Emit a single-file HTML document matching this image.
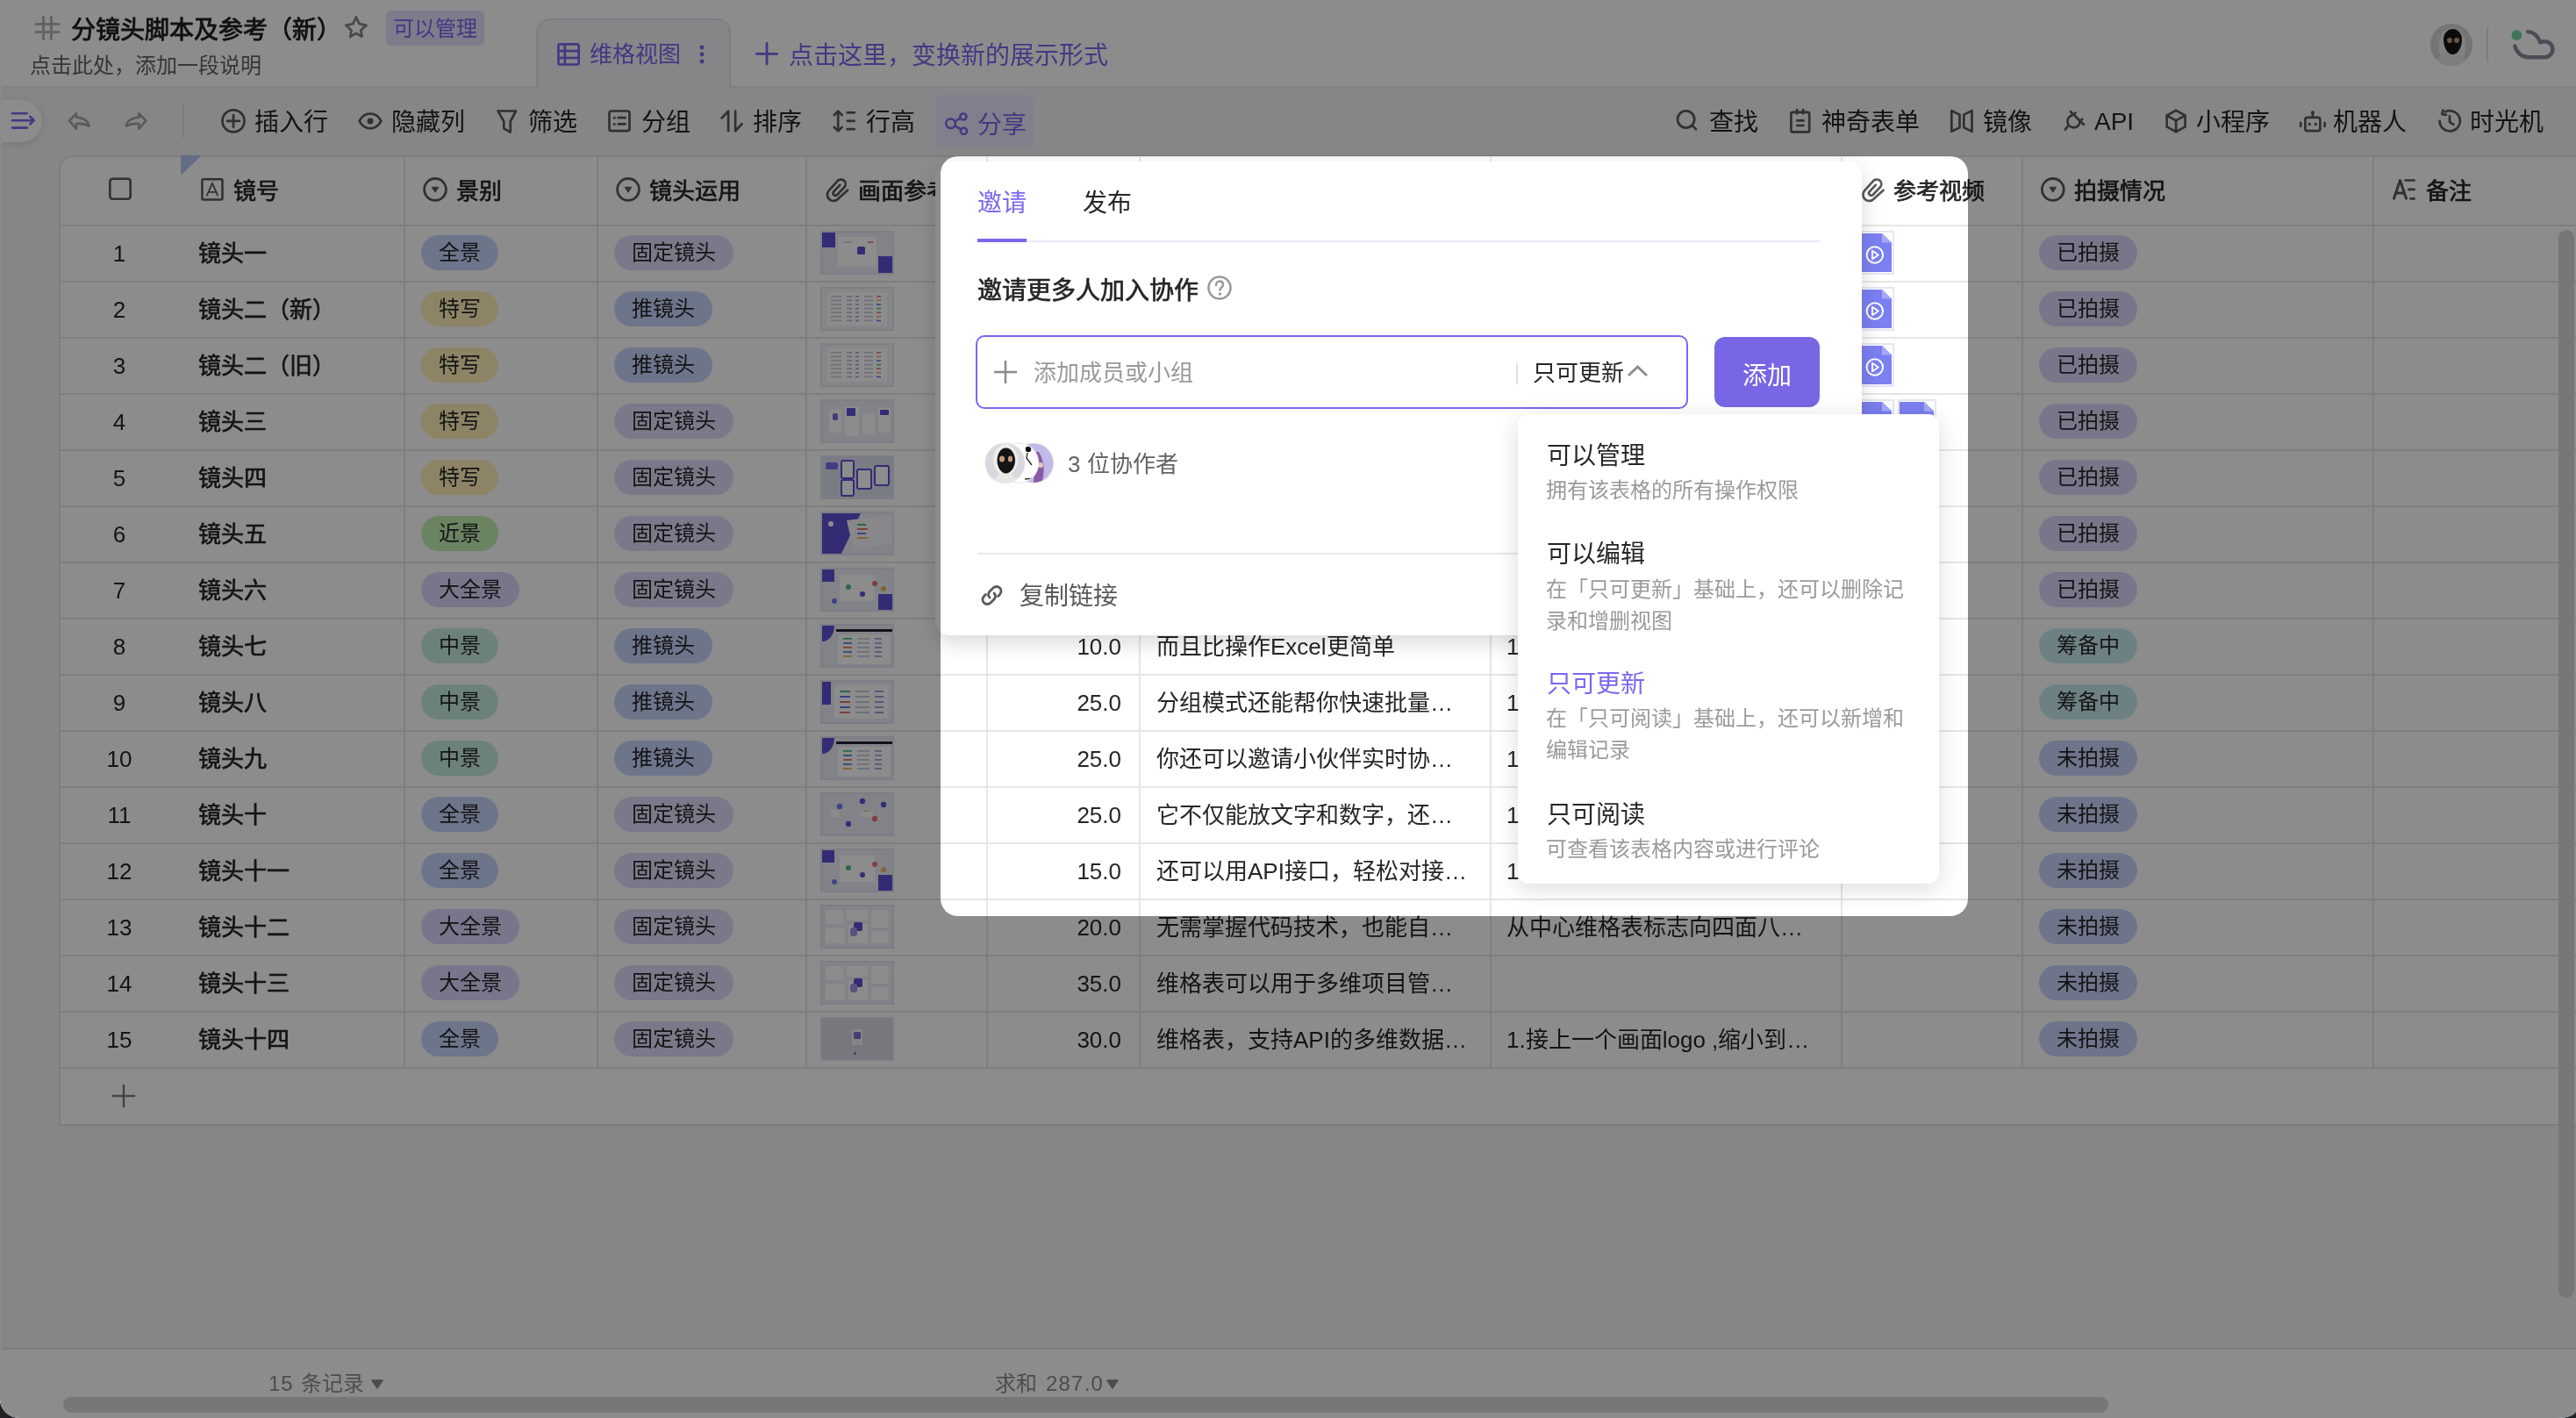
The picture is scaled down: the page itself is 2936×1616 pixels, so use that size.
<!DOCTYPE html><html lang="zh-CN"><head><meta charset="utf-8"><style>
*{box-sizing:border-box;margin:0;padding:0}
html,body{width:2936px;height:1616px;overflow:hidden;background:#1f2328}
body{font-family:"Liberation Sans",sans-serif;position:relative}
.page{position:absolute;left:0;top:0;width:2936px;height:1616px;background:#f3f4f8;border-radius:0 0 20px 22px / 0 0 9px 22px;overflow:hidden;will-change:transform}
.t{position:absolute;line-height:40px;white-space:nowrap}
.abs{position:absolute}
svg{position:absolute;overflow:visible}
.hl{position:absolute;height:2px;background:#e6e6e6}
.vl{position:absolute;width:2px;background:#e6e6e6}
.tag{position:absolute;height:40px;border-radius:20px;font-size:24px;line-height:40px;color:#262626;padding:0 20px;white-space:nowrap}
.thumb{position:absolute;width:84px;height:50px;border:2px solid #e4e4f0;background:#eef0f7;overflow:hidden}
.vid{position:absolute;width:44px;height:50px;border:2px solid #e6e6f5;background:#fff}
</style></head><body><div class="page">
<div class="abs" style="left:0;top:0;width:2px;height:1616px;background:#fbfbff;z-index:5"></div>
<div class="abs" style="left:0;top:0;width:2936px;height:100px;background:#fff;border-bottom:2px solid #e8e8f0"></div>
<div class="t" style="left:81px;top:15.0px;font-size:28px;color:#1f1f1f;font-weight:500;-webkit-text-stroke:0.9px #1f1f1f;">分镜头脚本及参考（新）</div>
<div class="abs" style="left:440px;top:12px;width:112px;height:40px;border-radius:6px;background:#e6e1fd"></div>
<div class="t" style="left:448px;top:13.4px;font-size:24px;color:#7b67ee;font-weight:normal;">可以管理</div>
<div class="t" style="left:34px;top:55.4px;font-size:24px;color:#636363;font-weight:normal;">点击此处，添加一段说明</div>
<div class="abs" style="left:611px;top:21px;width:222px;height:80px;background:#f3f4f8;border:2px solid #e3e3ee;border-bottom:none;border-radius:16px 16px 0 0"></div>
<div class="t" style="left:672px;top:42.4px;font-size:26px;color:#7b67ee;font-weight:normal;">维格视图</div>
<div class="t" style="left:899px;top:43.5px;font-size:28px;color:#7b67ee;font-weight:normal;">点击这里，变换新的展示形式</div>
<div class="abs" style="left:2770px;top:27px;width:48px;height:48px;border-radius:50%;background:radial-gradient(circle at 50% 45%,#e2e2e2,#c9c9c9);overflow:hidden"><div class="abs" style="left:10px;top:5px;width:30px;height:40px;border-radius:50% 50% 40% 40%;background:#ededed"></div><div class="abs" style="left:7px;top:34px;width:34px;height:20px;border-radius:45% 45% 0 0;background:#e6e6e6"></div><div class="abs" style="left:15px;top:6px;width:21px;height:29px;border-radius:50% 50% 50% 50% / 40% 40% 60% 60%;background:#141414"></div><div class="abs" style="left:18.5px;top:15.5px;width:6px;height:6px;border-radius:50%;background:#c79a7c"></div><div class="abs" style="left:27px;top:15.5px;width:6px;height:6px;border-radius:50%;background:#c79a7c"></div></div>
<div class="abs" style="left:2834px;top:31px;width:2px;height:40px;background:#e6e6e6"></div>
<div class="abs" style="left:-30px;top:114px;width:78px;height:48px;border-radius:24px;background:#fff;box-shadow:0 2px 10px rgba(0,0,0,0.12)"></div>
<div class="abs" style="left:208px;top:119px;width:2px;height:38px;background:#dedede"></div>
<div class="t" style="left:290px;top:120.0px;font-size:28px;color:#262626;font-weight:normal;">插入行</div>
<div class="t" style="left:446px;top:120.0px;font-size:28px;color:#262626;font-weight:normal;">隐藏列</div>
<div class="t" style="left:602px;top:120.0px;font-size:28px;color:#262626;font-weight:normal;">筛选</div>
<div class="t" style="left:731px;top:120.0px;font-size:28px;color:#262626;font-weight:normal;">分组</div>
<div class="t" style="left:858px;top:120.0px;font-size:28px;color:#262626;font-weight:normal;">排序</div>
<div class="t" style="left:987px;top:120.0px;font-size:28px;color:#262626;font-weight:normal;">行高</div>
<div class="abs" style="left:1066px;top:108px;width:112px;height:60px;border-radius:8px;background:#ebe8fd"></div>
<div class="t" style="left:1114px;top:123.2px;font-size:28px;color:#7b67ee;font-weight:normal;">分享</div>
<div class="t" style="left:1948px;top:120.2px;font-size:28px;color:#262626;font-weight:normal;">查找</div>
<div class="t" style="left:2076px;top:120.2px;font-size:28px;color:#262626;font-weight:normal;">神奇表单</div>
<div class="t" style="left:2260px;top:120.2px;font-size:28px;color:#262626;font-weight:normal;">镜像</div>
<div class="t" style="left:2387px;top:119px;font-size:28px;color:#262626">API</div>
<div class="t" style="left:2503px;top:120.2px;font-size:28px;color:#262626;font-weight:normal;">小程序</div>
<div class="t" style="left:2659px;top:120.2px;font-size:28px;color:#262626;font-weight:normal;">机器人</div>
<div class="t" style="left:2815px;top:120.2px;font-size:28px;color:#262626;font-weight:normal;">时光机</div>
<div class="abs" style="left:67px;top:177px;width:3033px;height:1106px;background:#fff;border:2px solid #e3e3e3;border-radius:16px 0 0 0"></div>
<div class="hl" style="left:67px;top:256px;width:3033px"></div>
<div class="hl" style="left:67px;top:320px;width:3033px"></div>
<div class="hl" style="left:67px;top:384px;width:3033px"></div>
<div class="hl" style="left:67px;top:448px;width:3033px"></div>
<div class="hl" style="left:67px;top:512px;width:3033px"></div>
<div class="hl" style="left:67px;top:576px;width:3033px"></div>
<div class="hl" style="left:67px;top:640px;width:3033px"></div>
<div class="hl" style="left:67px;top:704px;width:3033px"></div>
<div class="hl" style="left:67px;top:768px;width:3033px"></div>
<div class="hl" style="left:67px;top:832px;width:3033px"></div>
<div class="hl" style="left:67px;top:896px;width:3033px"></div>
<div class="hl" style="left:67px;top:960px;width:3033px"></div>
<div class="hl" style="left:67px;top:1024px;width:3033px"></div>
<div class="hl" style="left:67px;top:1088px;width:3033px"></div>
<div class="hl" style="left:67px;top:1152px;width:3033px"></div>
<div class="hl" style="left:67px;top:1216px;width:3033px"></div>
<div class="vl" style="left:460px;top:177px;height:1040px"></div>
<div class="vl" style="left:680px;top:177px;height:1040px"></div>
<div class="vl" style="left:918px;top:177px;height:1040px"></div>
<div class="vl" style="left:1124px;top:177px;height:1040px"></div>
<div class="vl" style="left:1298px;top:177px;height:1040px"></div>
<div class="vl" style="left:1698px;top:177px;height:1040px"></div>
<div class="vl" style="left:2098px;top:177px;height:1040px"></div>
<div class="vl" style="left:2304px;top:177px;height:1040px"></div>
<div class="vl" style="left:2704px;top:177px;height:1040px"></div>
<svg style="left:206px;top:177px" width="24" height="23" viewBox="0 0 24 23"><path d="M0 0 L24 0 L0 23 Z" fill="#b7c6f5"/></svg>
<div class="t" style="left:266px;top:197.7px;font-size:26px;color:#262626;font-weight:500;-webkit-text-stroke:0.7px #262626;">镜号</div>
<div class="t" style="left:520px;top:197.7px;font-size:26px;color:#262626;font-weight:500;-webkit-text-stroke:0.7px #262626;">景别</div>
<div class="t" style="left:740px;top:197.7px;font-size:26px;color:#262626;font-weight:500;-webkit-text-stroke:0.7px #262626;">镜头运用</div>
<div class="t" style="left:978px;top:197.7px;font-size:26px;color:#262626;font-weight:500;-webkit-text-stroke:0.7px #262626;">画面参考</div>
<div class="t" style="left:1144px;top:197.7px;font-size:26px;color:#262626;font-weight:500;-webkit-text-stroke:0.7px #262626;">时长</div>
<div class="t" style="left:1318px;top:197.7px;font-size:26px;color:#262626;font-weight:500;-webkit-text-stroke:0.7px #262626;">台词</div>
<div class="t" style="left:1717px;top:197.7px;font-size:26px;color:#262626;font-weight:500;-webkit-text-stroke:0.7px #262626;">画面描述</div>
<div class="t" style="left:2158px;top:197.7px;font-size:26px;color:#262626;font-weight:500;-webkit-text-stroke:0.7px #262626;">参考视频</div>
<div class="t" style="left:2364px;top:197.7px;font-size:26px;color:#262626;font-weight:500;-webkit-text-stroke:0.7px #262626;">拍摄情况</div>
<div class="t" style="left:2765px;top:197.7px;font-size:26px;color:#262626;font-weight:500;-webkit-text-stroke:0.7px #262626;">备注</div>
<div class="t" style="left:67px;top:269.0px;width:138px;text-align:center;font-size:26px;color:#262626">1</div>
<div class="t" style="left:226px;top:268.9px;font-size:26px;color:#262626;font-weight:500;-webkit-text-stroke:0.7px #262626;">镜头一</div>
<div class="tag" style="left:480px;top:268px;background:#c6d6fd">全景</div>
<div class="tag" style="left:700px;top:268px;background:#e2dafb">固定镜头</div>
<div class="thumb" style="left:935px;top:263px"></div>
<div class="vid" style="left:2115px;top:263px"><svg style="left:-2px;top:-1px" width="44" height="46" viewBox="0 0 44 46"><path d="M2 2 L30 2 L41 12.5 L41 46 L2 46 Z" fill="#7c80f2"/><path d="M30 2 L41 12.5 L30 12.5 Z" fill="#a6a9f8"/><circle cx="21.8" cy="26.5" r="9.2" fill="none" stroke="#fff" stroke-width="2"/><path d="M19 21.8 L25.8 26.5 L19 31.2 Z" fill="none" stroke="#fff" stroke-width="1.9" stroke-linejoin="round"/></svg></div>
<div class="tag" style="left:2324px;top:268px;background:#ded7fc">已拍摄</div>
<div class="t" style="left:67px;top:333.0px;width:138px;text-align:center;font-size:26px;color:#262626">2</div>
<div class="t" style="left:226px;top:332.9px;font-size:26px;color:#262626;font-weight:500;-webkit-text-stroke:0.7px #262626;">镜头二（新）</div>
<div class="tag" style="left:480px;top:332px;background:#fff0b8">特写</div>
<div class="tag" style="left:700px;top:332px;background:#c6d6fd">推镜头</div>
<div class="thumb" style="left:935px;top:327px"></div>
<div class="vid" style="left:2115px;top:327px"><svg style="left:-2px;top:-1px" width="44" height="46" viewBox="0 0 44 46"><path d="M2 2 L30 2 L41 12.5 L41 46 L2 46 Z" fill="#7c80f2"/><path d="M30 2 L41 12.5 L30 12.5 Z" fill="#a6a9f8"/><circle cx="21.8" cy="26.5" r="9.2" fill="none" stroke="#fff" stroke-width="2"/><path d="M19 21.8 L25.8 26.5 L19 31.2 Z" fill="none" stroke="#fff" stroke-width="1.9" stroke-linejoin="round"/></svg></div>
<div class="tag" style="left:2324px;top:332px;background:#ded7fc">已拍摄</div>
<div class="t" style="left:67px;top:397.0px;width:138px;text-align:center;font-size:26px;color:#262626">3</div>
<div class="t" style="left:226px;top:396.9px;font-size:26px;color:#262626;font-weight:500;-webkit-text-stroke:0.7px #262626;">镜头二（旧）</div>
<div class="tag" style="left:480px;top:396px;background:#fff0b8">特写</div>
<div class="tag" style="left:700px;top:396px;background:#c6d6fd">推镜头</div>
<div class="thumb" style="left:935px;top:391px"></div>
<div class="vid" style="left:2115px;top:391px"><svg style="left:-2px;top:-1px" width="44" height="46" viewBox="0 0 44 46"><path d="M2 2 L30 2 L41 12.5 L41 46 L2 46 Z" fill="#7c80f2"/><path d="M30 2 L41 12.5 L30 12.5 Z" fill="#a6a9f8"/><circle cx="21.8" cy="26.5" r="9.2" fill="none" stroke="#fff" stroke-width="2"/><path d="M19 21.8 L25.8 26.5 L19 31.2 Z" fill="none" stroke="#fff" stroke-width="1.9" stroke-linejoin="round"/></svg></div>
<div class="tag" style="left:2324px;top:396px;background:#ded7fc">已拍摄</div>
<div class="t" style="left:67px;top:461.0px;width:138px;text-align:center;font-size:26px;color:#262626">4</div>
<div class="t" style="left:226px;top:460.9px;font-size:26px;color:#262626;font-weight:500;-webkit-text-stroke:0.7px #262626;">镜头三</div>
<div class="tag" style="left:480px;top:460px;background:#fff0b8">特写</div>
<div class="tag" style="left:700px;top:460px;background:#e2dafb">固定镜头</div>
<div class="thumb" style="left:935px;top:455px"></div>
<div class="vid" style="left:2115px;top:455px"><svg style="left:-2px;top:-1px" width="44" height="46" viewBox="0 0 44 46"><path d="M2 2 L30 2 L41 12.5 L41 46 L2 46 Z" fill="#7c80f2"/><path d="M30 2 L41 12.5 L30 12.5 Z" fill="#a6a9f8"/><circle cx="21.8" cy="26.5" r="9.2" fill="none" stroke="#fff" stroke-width="2"/><path d="M19 21.8 L25.8 26.5 L19 31.2 Z" fill="none" stroke="#fff" stroke-width="1.9" stroke-linejoin="round"/></svg></div>
<div class="vid" style="left:2163px;top:455px"><svg style="left:-2px;top:-1px" width="44" height="46" viewBox="0 0 44 46"><path d="M2 2 L30 2 L41 12.5 L41 46 L2 46 Z" fill="#7c80f2"/><path d="M30 2 L41 12.5 L30 12.5 Z" fill="#a6a9f8"/><circle cx="21.8" cy="26.5" r="9.2" fill="none" stroke="#fff" stroke-width="2"/><path d="M19 21.8 L25.8 26.5 L19 31.2 Z" fill="none" stroke="#fff" stroke-width="1.9" stroke-linejoin="round"/></svg></div>
<div class="tag" style="left:2324px;top:460px;background:#ded7fc">已拍摄</div>
<div class="t" style="left:67px;top:525.0px;width:138px;text-align:center;font-size:26px;color:#262626">5</div>
<div class="t" style="left:226px;top:524.9px;font-size:26px;color:#262626;font-weight:500;-webkit-text-stroke:0.7px #262626;">镜头四</div>
<div class="tag" style="left:480px;top:524px;background:#fff0b8">特写</div>
<div class="tag" style="left:700px;top:524px;background:#e2dafb">固定镜头</div>
<div class="thumb" style="left:935px;top:519px"></div>
<div class="tag" style="left:2324px;top:524px;background:#ded7fc">已拍摄</div>
<div class="t" style="left:67px;top:589.0px;width:138px;text-align:center;font-size:26px;color:#262626">6</div>
<div class="t" style="left:226px;top:588.9px;font-size:26px;color:#262626;font-weight:500;-webkit-text-stroke:0.7px #262626;">镜头五</div>
<div class="tag" style="left:480px;top:588px;background:#c1f0b3">近景</div>
<div class="tag" style="left:700px;top:588px;background:#e2dafb">固定镜头</div>
<div class="thumb" style="left:935px;top:583px"></div>
<div class="tag" style="left:2324px;top:588px;background:#ded7fc">已拍摄</div>
<div class="t" style="left:67px;top:653.0px;width:138px;text-align:center;font-size:26px;color:#262626">7</div>
<div class="t" style="left:226px;top:652.9px;font-size:26px;color:#262626;font-weight:500;-webkit-text-stroke:0.7px #262626;">镜头六</div>
<div class="tag" style="left:480px;top:652px;background:#dcd6fd">大全景</div>
<div class="tag" style="left:700px;top:652px;background:#e2dafb">固定镜头</div>
<div class="thumb" style="left:935px;top:647px"></div>
<div class="tag" style="left:2324px;top:652px;background:#ded7fc">已拍摄</div>
<div class="t" style="left:67px;top:717.0px;width:138px;text-align:center;font-size:26px;color:#262626">8</div>
<div class="t" style="left:226px;top:716.9px;font-size:26px;color:#262626;font-weight:500;-webkit-text-stroke:0.7px #262626;">镜头七</div>
<div class="tag" style="left:480px;top:716px;background:#c5ecdc">中景</div>
<div class="tag" style="left:700px;top:716px;background:#c6d6fd">推镜头</div>
<div class="thumb" style="left:935px;top:711px"></div>
<div class="t" style="left:1125px;top:717.0px;width:153px;text-align:right;font-size:26px;color:#262626">10.0</div>
<div class="t" style="left:1318px;top:716.9px;font-size:26px;color:#262626;font-weight:normal;">而且比操作Excel更简单</div>
<div class="t" style="left:1717px;top:716.9px;font-size:26px;color:#262626;font-weight:normal;">1.</div>
<div class="tag" style="left:2324px;top:716px;background:#c6ecf3">筹备中</div>
<div class="t" style="left:67px;top:781.0px;width:138px;text-align:center;font-size:26px;color:#262626">9</div>
<div class="t" style="left:226px;top:780.9px;font-size:26px;color:#262626;font-weight:500;-webkit-text-stroke:0.7px #262626;">镜头八</div>
<div class="tag" style="left:480px;top:780px;background:#c5ecdc">中景</div>
<div class="tag" style="left:700px;top:780px;background:#c6d6fd">推镜头</div>
<div class="thumb" style="left:935px;top:775px"></div>
<div class="t" style="left:1125px;top:781.0px;width:153px;text-align:right;font-size:26px;color:#262626">25.0</div>
<div class="t" style="left:1318px;top:780.9px;font-size:26px;color:#262626;font-weight:normal;">分组模式还能帮你快速批量…</div>
<div class="t" style="left:1717px;top:780.9px;font-size:26px;color:#262626;font-weight:normal;">1.</div>
<div class="tag" style="left:2324px;top:780px;background:#c6ecf3">筹备中</div>
<div class="t" style="left:67px;top:845.0px;width:138px;text-align:center;font-size:26px;color:#262626">10</div>
<div class="t" style="left:226px;top:844.9px;font-size:26px;color:#262626;font-weight:500;-webkit-text-stroke:0.7px #262626;">镜头九</div>
<div class="tag" style="left:480px;top:844px;background:#c5ecdc">中景</div>
<div class="tag" style="left:700px;top:844px;background:#c6d6fd">推镜头</div>
<div class="thumb" style="left:935px;top:839px"></div>
<div class="t" style="left:1125px;top:845.0px;width:153px;text-align:right;font-size:26px;color:#262626">25.0</div>
<div class="t" style="left:1318px;top:844.9px;font-size:26px;color:#262626;font-weight:normal;">你还可以邀请小伙伴实时协…</div>
<div class="t" style="left:1717px;top:844.9px;font-size:26px;color:#262626;font-weight:normal;">1.</div>
<div class="tag" style="left:2324px;top:844px;background:#c8d4fb">未拍摄</div>
<div class="t" style="left:67px;top:909.0px;width:138px;text-align:center;font-size:26px;color:#262626">11</div>
<div class="t" style="left:226px;top:908.9px;font-size:26px;color:#262626;font-weight:500;-webkit-text-stroke:0.7px #262626;">镜头十</div>
<div class="tag" style="left:480px;top:908px;background:#c6d6fd">全景</div>
<div class="tag" style="left:700px;top:908px;background:#e2dafb">固定镜头</div>
<div class="thumb" style="left:935px;top:903px"></div>
<div class="t" style="left:1125px;top:909.0px;width:153px;text-align:right;font-size:26px;color:#262626">25.0</div>
<div class="t" style="left:1318px;top:908.9px;font-size:26px;color:#262626;font-weight:normal;">它不仅能放文字和数字，还…</div>
<div class="t" style="left:1717px;top:908.9px;font-size:26px;color:#262626;font-weight:normal;">1.</div>
<div class="tag" style="left:2324px;top:908px;background:#c8d4fb">未拍摄</div>
<div class="t" style="left:67px;top:973.0px;width:138px;text-align:center;font-size:26px;color:#262626">12</div>
<div class="t" style="left:226px;top:972.9px;font-size:26px;color:#262626;font-weight:500;-webkit-text-stroke:0.7px #262626;">镜头十一</div>
<div class="tag" style="left:480px;top:972px;background:#c6d6fd">全景</div>
<div class="tag" style="left:700px;top:972px;background:#e2dafb">固定镜头</div>
<div class="thumb" style="left:935px;top:967px"></div>
<div class="t" style="left:1125px;top:973.0px;width:153px;text-align:right;font-size:26px;color:#262626">15.0</div>
<div class="t" style="left:1318px;top:972.9px;font-size:26px;color:#262626;font-weight:normal;">还可以用API接口，轻松对接…</div>
<div class="t" style="left:1717px;top:972.9px;font-size:26px;color:#262626;font-weight:normal;">1.</div>
<div class="tag" style="left:2324px;top:972px;background:#c8d4fb">未拍摄</div>
<div class="t" style="left:67px;top:1037.0px;width:138px;text-align:center;font-size:26px;color:#262626">13</div>
<div class="t" style="left:226px;top:1036.9px;font-size:26px;color:#262626;font-weight:500;-webkit-text-stroke:0.7px #262626;">镜头十二</div>
<div class="tag" style="left:480px;top:1036px;background:#dcd6fd">大全景</div>
<div class="tag" style="left:700px;top:1036px;background:#e2dafb">固定镜头</div>
<div class="thumb" style="left:935px;top:1031px"></div>
<div class="t" style="left:1125px;top:1037.0px;width:153px;text-align:right;font-size:26px;color:#262626">20.0</div>
<div class="t" style="left:1318px;top:1036.9px;font-size:26px;color:#262626;font-weight:normal;">无需掌握代码技术，也能自…</div>
<div class="t" style="left:1717px;top:1036.9px;font-size:26px;color:#262626;font-weight:normal;">从中心维格表标志向四面八…</div>
<div class="tag" style="left:2324px;top:1036px;background:#c8d4fb">未拍摄</div>
<div class="t" style="left:67px;top:1101.0px;width:138px;text-align:center;font-size:26px;color:#262626">14</div>
<div class="t" style="left:226px;top:1100.9px;font-size:26px;color:#262626;font-weight:500;-webkit-text-stroke:0.7px #262626;">镜头十三</div>
<div class="tag" style="left:480px;top:1100px;background:#dcd6fd">大全景</div>
<div class="tag" style="left:700px;top:1100px;background:#e2dafb">固定镜头</div>
<div class="thumb" style="left:935px;top:1095px"></div>
<div class="t" style="left:1125px;top:1101.0px;width:153px;text-align:right;font-size:26px;color:#262626">35.0</div>
<div class="t" style="left:1318px;top:1100.9px;font-size:26px;color:#262626;font-weight:normal;">维格表可以用于多维项目管…</div>
<div class="tag" style="left:2324px;top:1100px;background:#c8d4fb">未拍摄</div>
<div class="t" style="left:67px;top:1165.0px;width:138px;text-align:center;font-size:26px;color:#262626">15</div>
<div class="t" style="left:226px;top:1164.9px;font-size:26px;color:#262626;font-weight:500;-webkit-text-stroke:0.7px #262626;">镜头十四</div>
<div class="tag" style="left:480px;top:1164px;background:#c6d6fd">全景</div>
<div class="tag" style="left:700px;top:1164px;background:#e2dafb">固定镜头</div>
<div class="thumb" style="left:935px;top:1159px"></div>
<div class="t" style="left:1125px;top:1165.0px;width:153px;text-align:right;font-size:26px;color:#262626">30.0</div>
<div class="t" style="left:1318px;top:1164.9px;font-size:26px;color:#262626;font-weight:normal;">维格表，支持API的多维数据…</div>
<div class="t" style="left:1717px;top:1164.9px;font-size:26px;color:#262626;font-weight:normal;">1.接上一个画面logo ,缩小到…</div>
<div class="tag" style="left:2324px;top:1164px;background:#c8d4fb">未拍摄</div>
<svg style="left:128px;top:1236px" width="26" height="26" viewBox="0 0 26 26"><line x1="13" y1="0" x2="13" y2="26" stroke="#7a7a7a" stroke-width="2.4"/><line x1="0" y1="13" x2="26" y2="13" stroke="#7a7a7a" stroke-width="2.4"/></svg>
<div class="abs" style="left:0;top:1536px;width:2936px;height:80px;background:#fff;border-top:2px solid #e4e4e4"></div>
<div class="t" style="left:306px;top:1556.6px;font-size:24px;color:#8c8c8c;letter-spacing:1px">15</div>
<div class="t" style="left:343px;top:1556.6px;font-size:24px;color:#8c8c8c;font-weight:normal;">条记录</div>
<svg style="left:423px;top:1572px" width="14" height="11" viewBox="0 0 14 11"><path d="M1 1 L13 1 L7 10 Z" fill="#8a8a8a" stroke="#8a8a8a" stroke-width="1.5" stroke-linejoin="round"/></svg>
<div class="t" style="left:1134px;top:1556.6px;font-size:24px;color:#8c8c8c;font-weight:normal;">求和</div>
<div class="t" style="left:1192px;top:1556.6px;font-size:24px;color:#8c8c8c;letter-spacing:1.2px">287.0</div>
<svg style="left:1261px;top:1572px" width="14" height="11" viewBox="0 0 14 11"><path d="M1 1 L13 1 L7 10 Z" fill="#8a8a8a" stroke="#8a8a8a" stroke-width="1.5" stroke-linejoin="round"/></svg>
<div class="abs" style="left:72px;top:1592px;width:2331px;height:18px;border-radius:9px;background:#d9d9d9"></div>
<div class="abs" style="left:2916px;top:262px;width:18px;height:1217px;border-radius:9px;background:#d9d9d9"></div>
<svg style="left:0;top:0" width="2936" height="1616"><g stroke="#b6b6b6" stroke-width="3" stroke-linecap="round"><line x1="49.5" y1="19.3" x2="49.5" y2="44.2"/><line x1="58.4" y1="19.3" x2="58.4" y2="44.2"/><line x1="41" y1="27.4" x2="67" y2="27.4"/><line x1="41" y1="36.4" x2="67" y2="36.4"/></g><path d="M405.8 19.5 L409.5 27.2 L417.5 28.8 L411.3 34.5 L412.5 41.6 L405.9 38 L399.3 41.8 L400.5 34.5 L394.3 28.8 L402.3 27.2 Z" fill="none" stroke="#868686" stroke-width="2.8" stroke-linejoin="round"/><g fill="none" stroke="#7b67ee" stroke-width="2.7"><rect x="636.4" y="50.3" width="23.2" height="23.2" rx="2"/><line x1="636.4" y1="58.1" x2="659.6" y2="58.1"/><line x1="636.4" y1="66" x2="659.6" y2="66"/><line x1="643.8" y1="50.3" x2="643.8" y2="73.5"/></g><circle cx="800" cy="54" r="2.4" fill="#7b67ee"/><circle cx="800" cy="62" r="2.4" fill="#7b67ee"/><circle cx="800" cy="70" r="2.4" fill="#7b67ee"/><g stroke="#7b67ee" stroke-width="2.8" stroke-linecap="round"><line x1="874" y1="49.5" x2="874" y2="73"/><line x1="862.3" y1="61.3" x2="885.7" y2="61.3"/></g><path d="M2866.3 52.4 C2868.3 60 2874.3 65.3 2882.2 65.3 L2899.6 65.3 C2905.3 65.3 2909.4 61 2909.4 56.2 C2909.4 51 2905.3 47.3 2900.4 47.3 C2898 47.3 2896.4 47.8 2895.3 48.3 C2892.5 41 2887.5 36.5 2881.2 36.1" fill="none" stroke="#878a9e" stroke-width="4.4" stroke-linecap="round" stroke-linejoin="round"/><circle cx="2868.4" cy="40.2" r="5.9" fill="#6fd9a0"/><g stroke="#7b67ee" stroke-width="2.6" stroke-linecap="round" fill="none"><line x1="14" y1="129.2" x2="30.6" y2="129.2"/><line x1="14" y1="137.2" x2="38" y2="137.2"/><line x1="14" y1="145.6" x2="30.6" y2="145.6"/><polyline points="34.4,132.9 38.6,137.2 34.4,141.5" stroke-linejoin="round"/></g><path d="M79 137.6 L87 129.3 L87 133.6 C94 134 100.5 137.5 101.5 143.6 C97 141 92 140.5 87.2 141 L87 146.8 Z" fill="none" stroke="#a3a3a3" stroke-width="2.6" stroke-linejoin="round"/><path d="M79 137.6 L87 129.3 L87 133.6 C94 134 100.5 137.5 101.5 143.6 C97 141 92 140.5 87.2 141 L87 146.8 Z" transform="translate(245.3,0) scale(-1,1)" fill="none" stroke="#a3a3a3" stroke-width="2.6" stroke-linejoin="round"/><g stroke="#595959" fill="none" stroke-width="2.7" stroke-linecap="round" stroke-linejoin="round"><circle cx="266" cy="137.9" r="12.5"/><line x1="266" y1="131" x2="266" y2="144.8"/><line x1="259.1" y1="137.9" x2="272.9" y2="137.9"/></g><g stroke="#595959" fill="none" stroke-width="2.7" stroke-linecap="round" stroke-linejoin="round"><path d="M409.6 137.9 C413 131.3 417.3 129.5 422 129.5 C426.7 129.5 431 131.3 434.4 137.9 C431 144.5 426.7 146.3 422 146.3 C417.3 146.3 413 144.5 409.6 137.9 Z"/></g><circle cx="422" cy="137.9" r="3.5" fill="#595959"/><g stroke="#595959" fill="none" stroke-width="2.7" stroke-linecap="round" stroke-linejoin="round"><path d="M567.6 126.5 L588 126.5 L581.7 138.3 L581.7 150.6 L574.3 146.4 L574.3 138.3 Z"/></g><g stroke="#595959" fill="none" stroke-width="2.7" stroke-linecap="round" stroke-linejoin="round"><rect x="694.5" y="126.5" width="23" height="22.7" rx="2.5"/><line x1="704.8" y1="134.2" x2="712.6" y2="134.2"/><line x1="704.8" y1="141.4" x2="712.6" y2="141.4"/></g><circle cx="700.2" cy="134.2" r="1.5" fill="#595959"/><circle cx="700.2" cy="141.4" r="1.5" fill="#595959"/><g stroke="#595959" fill="none" stroke-width="2.7" stroke-linecap="round" stroke-linejoin="round"><polyline points="822.5,134.6 830.1,126.6 830.1,149.2"/><polyline points="845.6,141.3 838.1,149.2 838.1,126.6"/></g><g stroke="#595959" fill="none" stroke-width="2.7" stroke-linecap="round" stroke-linejoin="round"><line x1="955.2" y1="127" x2="955.2" y2="149"/><polyline points="950.8,131 955.2,126.6 959.6,131"/><polyline points="950.8,145 955.2,149.4 959.6,145"/><line x1="965.8" y1="128.4" x2="973.7" y2="128.4"/><line x1="965.8" y1="137.8" x2="973.7" y2="137.8"/><line x1="965.8" y1="147.2" x2="973.7" y2="147.2"/></g><g stroke="#7b67ee" fill="none" stroke-width="2.5" stroke-linecap="round"><circle cx="1083.5" cy="140.8" r="5.3"/><circle cx="1097.9" cy="133" r="3.6"/><circle cx="1098.4" cy="149.4" r="3.6"/><line x1="1088.3" y1="138.2" x2="1094.7" y2="134.7"/><line x1="1088.3" y1="143.4" x2="1095.2" y2="147.4"/></g><g stroke="#595959" fill="none" stroke-width="2.7" stroke-linecap="round" stroke-linejoin="round"><circle cx="1921.6" cy="136" r="9.6"/><line x1="1928.9" y1="143.3" x2="1933" y2="147.4"/></g><g stroke="#595959" fill="none" stroke-width="2.7" stroke-linecap="round" stroke-linejoin="round"><rect x="2041.4" y="127.8" width="20.8" height="22.6" rx="2"/><line x1="2048.1" y1="125" x2="2048.1" y2="129.5"/><line x1="2055.1" y1="125" x2="2055.1" y2="129.5"/><line x1="2048.3" y1="137.4" x2="2055.6" y2="137.4"/><line x1="2048.3" y1="143" x2="2055.6" y2="143"/></g><g stroke="#595959" fill="none" stroke-width="2.7" stroke-linecap="round" stroke-linejoin="round"><path d="M2224.3 126.2 L2233.5 130.6 L2233.5 145.4 L2224.3 149.8 Z"/><path d="M2247.5 126.2 L2238.3 130.6 L2238.3 145.4 L2247.5 149.8 Z"/></g><g stroke="#595959" fill="none" stroke-width="2.7" stroke-linecap="round" stroke-linejoin="round"><line x1="2359.9" y1="127.2" x2="2374.9" y2="142"/><line x1="2363.5" y1="130.7" x2="2365.6" y2="128.6"/><line x1="2370.9" y1="138.1" x2="2373.2" y2="135.8"/><path d="M2361.2 131.6 A7.05 7.05 0 1 0 2370.5 139"/><line x1="2356.6" y1="144" x2="2353.9" y2="147.6"/></g><g stroke="#595959" fill="none" stroke-width="2.7" stroke-linecap="round" stroke-linejoin="round"><path d="M2480.1 125.8 L2490.6 131.6 L2490.6 144.4 L2480.1 150.2 L2469.6 144.4 L2469.6 131.6 Z"/><polyline points="2469.6,131.6 2480.1,137.4 2490.6,131.6"/><line x1="2480.1" y1="137.4" x2="2480.1" y2="150.2"/></g><g stroke="#595959" fill="none" stroke-width="2.7" stroke-linecap="round" stroke-linejoin="round"><rect x="2627.4" y="133.8" width="17" height="15.4" rx="2.5"/><line x1="2635.9" y1="128.5" x2="2635.9" y2="133.5"/><line x1="2622.2" y1="140" x2="2622.2" y2="144"/><line x1="2649.6" y1="140" x2="2649.6" y2="144"/></g><circle cx="2635.9" cy="128.2" r="2" fill="#595959"/><circle cx="2632.3" cy="141.5" r="1.7" fill="#595959"/><circle cx="2639.3" cy="141.5" r="1.7" fill="#595959"/><g stroke="#595959" fill="none" stroke-width="2.7" stroke-linecap="round" stroke-linejoin="round"><path d="M2787.2 127.4 A11.6 11.6 0 1 1 2780.6 137.8"/><polyline points="2784.5,125.6 2783.4,130.1 2788,130.8"/><polyline points="2792,132.3 2792,139.2 2796.4,141.9"/></g><rect x="125.3" y="203.7" width="23.4" height="23" rx="3" fill="none" stroke="#595959" stroke-width="2.6"/><rect x="230.4" y="204.3" width="23.1" height="23.1" rx="1.5" fill="none" stroke="#595959" stroke-width="2.5"/><path d="M235.9 222.6 L242 208.8 L248.1 222.6 M237.6 218.8 L246.4 218.8" fill="none" stroke="#595959" stroke-width="1.8" stroke-linecap="round" stroke-linejoin="round"/><circle cx="496" cy="215.9" r="12.4" fill="none" stroke="#595959" stroke-width="2.8"/><path d="M492.2 213.3 L499.8 213.3 L496 219.2 Z" fill="#595959" stroke="#595959" stroke-width="1" stroke-linejoin="round"/><circle cx="716" cy="215.9" r="12.4" fill="none" stroke="#595959" stroke-width="2.8"/><path d="M712.2 213.3 L719.8 213.3 L716 219.2 Z" fill="#595959" stroke="#595959" stroke-width="1" stroke-linejoin="round"/><path transform="translate(941.5,201.6)" d="M24.6 15.2 L13.8 25 A6.8 6.8 0 0 1 3.2 15.6 L12.5 5.2 A5.3 5.3 0 0 1 21.3 11.3 L12.4 20.6 A2.7 2.7 0 0 1 8.5 17 L15.8 9.3" fill="none" stroke="#595959" stroke-width="2.7" stroke-linecap="round" stroke-linejoin="round"/><path transform="translate(2122,201.6)" d="M24.6 15.2 L13.8 25 A6.8 6.8 0 0 1 3.2 15.6 L12.5 5.2 A5.3 5.3 0 0 1 21.3 11.3 L12.4 20.6 A2.7 2.7 0 0 1 8.5 17 L15.8 9.3" fill="none" stroke="#595959" stroke-width="2.7" stroke-linecap="round" stroke-linejoin="round"/><circle cx="2339.8" cy="215.9" r="12.4" fill="none" stroke="#595959" stroke-width="2.8"/><path d="M2336.0 213.3 L2343.6000000000004 213.3 L2339.8 219.2 Z" fill="#595959" stroke="#595959" stroke-width="1" stroke-linejoin="round"/><g transform="translate(2726,203)" fill="none" stroke="#595959" stroke-linecap="round" stroke-linejoin="round"><path d="M2.5 23.2 L9.5 2.6 L16.5 23.2 M5.3 17 L13.7 17" stroke-width="3"/><g stroke-width="2.6"><line x1="15.6" y1="2.5" x2="25.7" y2="2.5"/><line x1="19.3" y1="12.9" x2="25.7" y2="12.9"/><line x1="21.3" y1="23.4" x2="25.7" y2="23.4"/></g></g><g transform="translate(937,265)"><clipPath id="tc0"><rect x="0" y="0" width="80" height="46"/></clipPath><g clip-path="url(#tc0)"><rect x="0" y="0" width="80" height="46" rx="0" fill="#eceef7" /><rect x="18" y="5" width="44" height="34" rx="2" fill="#ffffff" /><rect x="40" y="16" width="9" height="9" rx="1.5" fill="#5d50d6" /><rect x="0" y="0" width="15" height="17" rx="0" fill="#5d50d6" /><rect x="64" y="27" width="16" height="19" rx="0" fill="#5d50d6" /><rect x="24" y="10" width="10" height="2" rx="0" fill="#d0d3e6" /><rect x="52" y="10" width="6" height="2" rx="0" fill="#e08a9a" /></g></g><g transform="translate(937,329)"><clipPath id="tc1"><rect x="0" y="0" width="80" height="46"/></clipPath><g clip-path="url(#tc1)"><rect x="0" y="0" width="80" height="46" rx="0" fill="#f4f5f9" /><rect x="6" y="4" width="68" height="38" rx="1" fill="#ffffff" /><rect x="10" y="8.0" width="12" height="1.6" rx="0" fill="#c9ccdc" /><rect x="28" y="8.0" width="6" height="1.6" rx="0" fill="#b9bcd0" /><rect x="38" y="8.0" width="4" height="1.6" rx="0" fill="#9aa2e8" /><rect x="48" y="8.0" width="10" height="1.6" rx="0" fill="#c9ccdc" /><rect x="62" y="8.0" width="5" height="1.6" rx="0" fill="#e57373" /><rect x="10" y="12.6" width="12" height="1.6" rx="0" fill="#c9ccdc" /><rect x="28" y="12.6" width="6" height="1.6" rx="0" fill="#b9bcd0" /><rect x="38" y="12.6" width="4" height="1.6" rx="0" fill="#9aa2e8" /><rect x="48" y="12.6" width="10" height="1.6" rx="0" fill="#c9ccdc" /><rect x="62" y="12.6" width="5" height="1.6" rx="0" fill="#f0b35a" /><rect x="10" y="17.2" width="12" height="1.6" rx="0" fill="#c9ccdc" /><rect x="28" y="17.2" width="6" height="1.6" rx="0" fill="#b9bcd0" /><rect x="38" y="17.2" width="4" height="1.6" rx="0" fill="#9aa2e8" /><rect x="48" y="17.2" width="10" height="1.6" rx="0" fill="#c9ccdc" /><rect x="62" y="17.2" width="5" height="1.6" rx="0" fill="#6c7bf0" /><rect x="10" y="21.799999999999997" width="12" height="1.6" rx="0" fill="#c9ccdc" /><rect x="28" y="21.799999999999997" width="6" height="1.6" rx="0" fill="#b9bcd0" /><rect x="38" y="21.799999999999997" width="4" height="1.6" rx="0" fill="#9aa2e8" /><rect x="48" y="21.799999999999997" width="10" height="1.6" rx="0" fill="#c9ccdc" /><rect x="62" y="21.799999999999997" width="5" height="1.6" rx="0" fill="#4fbf8a" /><rect x="10" y="26.4" width="12" height="1.6" rx="0" fill="#c9ccdc" /><rect x="28" y="26.4" width="6" height="1.6" rx="0" fill="#b9bcd0" /><rect x="38" y="26.4" width="4" height="1.6" rx="0" fill="#9aa2e8" /><rect x="48" y="26.4" width="10" height="1.6" rx="0" fill="#c9ccdc" /><rect x="62" y="26.4" width="5" height="1.6" rx="0" fill="#e57373" /><rect x="10" y="31.0" width="12" height="1.6" rx="0" fill="#c9ccdc" /><rect x="28" y="31.0" width="6" height="1.6" rx="0" fill="#b9bcd0" /><rect x="38" y="31.0" width="4" height="1.6" rx="0" fill="#9aa2e8" /><rect x="48" y="31.0" width="10" height="1.6" rx="0" fill="#c9ccdc" /><rect x="62" y="31.0" width="5" height="1.6" rx="0" fill="#f0b35a" /><rect x="10" y="35.599999999999994" width="12" height="1.6" rx="0" fill="#c9ccdc" /><rect x="28" y="35.599999999999994" width="6" height="1.6" rx="0" fill="#b9bcd0" /><rect x="38" y="35.599999999999994" width="4" height="1.6" rx="0" fill="#9aa2e8" /><rect x="48" y="35.599999999999994" width="10" height="1.6" rx="0" fill="#c9ccdc" /><rect x="62" y="35.599999999999994" width="5" height="1.6" rx="0" fill="#6c7bf0" /></g></g><g transform="translate(937,393)"><clipPath id="tc2"><rect x="0" y="0" width="80" height="46"/></clipPath><g clip-path="url(#tc2)"><rect x="0" y="0" width="80" height="46" rx="0" fill="#f4f5f9" /><rect x="6" y="4" width="68" height="38" rx="1" fill="#ffffff" /><rect x="10" y="8.0" width="12" height="1.6" rx="0" fill="#c9ccdc" /><rect x="28" y="8.0" width="6" height="1.6" rx="0" fill="#b9bcd0" /><rect x="38" y="8.0" width="4" height="1.6" rx="0" fill="#9aa2e8" /><rect x="48" y="8.0" width="10" height="1.6" rx="0" fill="#c9ccdc" /><rect x="62" y="8.0" width="5" height="1.6" rx="0" fill="#e57373" /><rect x="10" y="12.6" width="12" height="1.6" rx="0" fill="#c9ccdc" /><rect x="28" y="12.6" width="6" height="1.6" rx="0" fill="#b9bcd0" /><rect x="38" y="12.6" width="4" height="1.6" rx="0" fill="#9aa2e8" /><rect x="48" y="12.6" width="10" height="1.6" rx="0" fill="#c9ccdc" /><rect x="62" y="12.6" width="5" height="1.6" rx="0" fill="#f0b35a" /><rect x="10" y="17.2" width="12" height="1.6" rx="0" fill="#c9ccdc" /><rect x="28" y="17.2" width="6" height="1.6" rx="0" fill="#b9bcd0" /><rect x="38" y="17.2" width="4" height="1.6" rx="0" fill="#9aa2e8" /><rect x="48" y="17.2" width="10" height="1.6" rx="0" fill="#c9ccdc" /><rect x="62" y="17.2" width="5" height="1.6" rx="0" fill="#6c7bf0" /><rect x="10" y="21.799999999999997" width="12" height="1.6" rx="0" fill="#c9ccdc" /><rect x="28" y="21.799999999999997" width="6" height="1.6" rx="0" fill="#b9bcd0" /><rect x="38" y="21.799999999999997" width="4" height="1.6" rx="0" fill="#9aa2e8" /><rect x="48" y="21.799999999999997" width="10" height="1.6" rx="0" fill="#c9ccdc" /><rect x="62" y="21.799999999999997" width="5" height="1.6" rx="0" fill="#4fbf8a" /><rect x="10" y="26.4" width="12" height="1.6" rx="0" fill="#c9ccdc" /><rect x="28" y="26.4" width="6" height="1.6" rx="0" fill="#b9bcd0" /><rect x="38" y="26.4" width="4" height="1.6" rx="0" fill="#9aa2e8" /><rect x="48" y="26.4" width="10" height="1.6" rx="0" fill="#c9ccdc" /><rect x="62" y="26.4" width="5" height="1.6" rx="0" fill="#e57373" /><rect x="10" y="31.0" width="12" height="1.6" rx="0" fill="#c9ccdc" /><rect x="28" y="31.0" width="6" height="1.6" rx="0" fill="#b9bcd0" /><rect x="38" y="31.0" width="4" height="1.6" rx="0" fill="#9aa2e8" /><rect x="48" y="31.0" width="10" height="1.6" rx="0" fill="#c9ccdc" /><rect x="62" y="31.0" width="5" height="1.6" rx="0" fill="#f0b35a" /><rect x="10" y="35.599999999999994" width="12" height="1.6" rx="0" fill="#c9ccdc" /><rect x="28" y="35.599999999999994" width="6" height="1.6" rx="0" fill="#b9bcd0" /><rect x="38" y="35.599999999999994" width="4" height="1.6" rx="0" fill="#9aa2e8" /><rect x="48" y="35.599999999999994" width="10" height="1.6" rx="0" fill="#c9ccdc" /><rect x="62" y="35.599999999999994" width="5" height="1.6" rx="0" fill="#6c7bf0" /></g></g><g transform="translate(937,457)"><clipPath id="tc3"><rect x="0" y="0" width="80" height="46"/></clipPath><g clip-path="url(#tc3)"><rect x="0" y="0" width="80" height="46" rx="0" fill="#eceef7" /><rect x="8" y="10" width="14" height="26" rx="2" fill="#ffffff" /><rect x="26" y="6" width="16" height="34" rx="2" fill="#ffffff" /><rect x="46" y="14" width="14" height="24" rx="2" fill="#ffffff" /><rect x="64" y="8" width="14" height="28" rx="2" fill="#ffffff" /><rect x="28" y="8" width="10" height="9" rx="1" fill="#5d50d6" /><rect x="66" y="10" width="10" height="6" rx="1" fill="#5d50d6" /><rect x="12" y="14" width="6" height="8" rx="2" fill="#7a6fe0" /></g></g><g transform="translate(937,521)"><clipPath id="tc4"><rect x="0" y="0" width="80" height="46"/></clipPath><g clip-path="url(#tc4)"><rect x="0" y="0" width="80" height="46" rx="0" fill="#dfe2f1" /><rect x="4" y="6" width="14" height="8" rx="2" fill="#7b6ee6" /><rect x="22" y="4" width="14" height="20" rx="2" fill="#ffffff" stroke="#5d50d6" stroke-width="2"/><rect x="22" y="26" width="14" height="18" rx="2" fill="#ffffff" stroke="#5d50d6" stroke-width="2"/><rect x="40" y="14" width="16" height="22" rx="2" fill="#ffffff" stroke="#5d50d6" stroke-width="2"/><rect x="60" y="10" width="16" height="22" rx="2" fill="#ffffff" stroke="#5d50d6" stroke-width="2"/></g></g><g transform="translate(937,585)"><clipPath id="tc5"><rect x="0" y="0" width="80" height="46"/></clipPath><g clip-path="url(#tc5)"><rect x="0" y="0" width="80" height="46" rx="0" fill="#eceef7" /><path d="M0 0 L44 0 L22 46 L0 46 Z" fill="#5d50d6"/><path d="M28 8 L80 2 L80 34 L36 42 Z" fill="#f7f7fb"/><rect x="40" y="12" width="10" height="2" rx="0" fill="#4fbf8a" /><rect x="40" y="17" width="12" height="2" rx="0" fill="#e57373" /><rect x="40" y="22" width="10" height="2" rx="0" fill="#6c7bf0" /><rect x="40" y="27" width="12" height="2" rx="0" fill="#f0b35a" /><circle cx="10" cy="12" r="3" fill="#ffffff"/></g></g><g transform="translate(937,649)"><clipPath id="tc6"><rect x="0" y="0" width="80" height="46"/></clipPath><g clip-path="url(#tc6)"><rect x="0" y="0" width="80" height="46" rx="0" fill="#eceef7" /><rect x="0" y="0" width="14" height="14" rx="0" fill="#5d50d6" /><rect x="20" y="6" width="40" height="30" rx="2" fill="#ffffff" /><rect x="64" y="28" width="16" height="18" rx="0" fill="#5d50d6" /><circle cx="30" cy="20" r="3" fill="#4fbf8a"/><circle cx="46" cy="28" r="3" fill="#5d50d6"/><circle cx="14" cy="36" r="3" fill="#6c7bf0"/><circle cx="60" cy="16" r="3" fill="#e57373"/><circle cx="70" cy="22" r="3" fill="#f0b35a"/></g></g><g transform="translate(937,713)"><clipPath id="tc7"><rect x="0" y="0" width="80" height="46"/></clipPath><g clip-path="url(#tc7)"><rect x="0" y="0" width="80" height="46" rx="0" fill="#eceef7" /><path d="M0 0 L14 0 C14 10 8 18 0 18 Z" fill="#5d50d6"/><rect x="16" y="4" width="64" height="3" rx="0" fill="#222233" /><rect x="18" y="10" width="60" height="34" rx="1" fill="#ffffff" /><rect x="24" y="14" width="10" height="1.8" rx="0" fill="#4fbf8a" /><rect x="40" y="14" width="14" height="1.8" rx="0" fill="#c9ccdc" /><rect x="60" y="14" width="8" height="1.8" rx="0" fill="#9aa2e8" /><rect x="24" y="19" width="10" height="1.8" rx="0" fill="#6c7bf0" /><rect x="40" y="19" width="14" height="1.8" rx="0" fill="#c9ccdc" /><rect x="60" y="19" width="8" height="1.8" rx="0" fill="#9aa2e8" /><rect x="24" y="24" width="10" height="1.8" rx="0" fill="#e57373" /><rect x="40" y="24" width="14" height="1.8" rx="0" fill="#c9ccdc" /><rect x="60" y="24" width="8" height="1.8" rx="0" fill="#9aa2e8" /><rect x="24" y="29" width="10" height="1.8" rx="0" fill="#6c7bf0" /><rect x="40" y="29" width="14" height="1.8" rx="0" fill="#c9ccdc" /><rect x="60" y="29" width="8" height="1.8" rx="0" fill="#9aa2e8" /><rect x="24" y="34" width="10" height="1.8" rx="0" fill="#f0b35a" /><rect x="40" y="34" width="14" height="1.8" rx="0" fill="#c9ccdc" /><rect x="60" y="34" width="8" height="1.8" rx="0" fill="#9aa2e8" /></g></g><g transform="translate(937,777)"><clipPath id="tc8"><rect x="0" y="0" width="80" height="46"/></clipPath><g clip-path="url(#tc8)"><rect x="0" y="0" width="80" height="46" rx="0" fill="#eceef7" /><rect x="0" y="0" width="10" height="26" rx="0" fill="#5d50d6" /><rect x="14" y="4" width="62" height="38" rx="1" fill="#ffffff" /><rect x="20" y="10" width="12" height="2" rx="0" fill="#4fbf8a" /><rect x="38" y="10" width="16" height="2" rx="0" fill="#c9ccdc" /><rect x="60" y="10" width="10" height="2" rx="0" fill="#9aa2e8" /><rect x="20" y="16" width="12" height="2" rx="0" fill="#6c7bf0" /><rect x="38" y="16" width="16" height="2" rx="0" fill="#c9ccdc" /><rect x="60" y="16" width="10" height="2" rx="0" fill="#9aa2e8" /><rect x="20" y="22" width="12" height="2" rx="0" fill="#e57373" /><rect x="38" y="22" width="16" height="2" rx="0" fill="#c9ccdc" /><rect x="60" y="22" width="10" height="2" rx="0" fill="#9aa2e8" /><rect x="20" y="28" width="12" height="2" rx="0" fill="#6c7bf0" /><rect x="38" y="28" width="16" height="2" rx="0" fill="#c9ccdc" /><rect x="60" y="28" width="10" height="2" rx="0" fill="#9aa2e8" /><rect x="20" y="34" width="12" height="2" rx="0" fill="#e57373" /><rect x="38" y="34" width="16" height="2" rx="0" fill="#c9ccdc" /><rect x="60" y="34" width="10" height="2" rx="0" fill="#9aa2e8" /></g></g><g transform="translate(937,841)"><clipPath id="tc9"><rect x="0" y="0" width="80" height="46"/></clipPath><g clip-path="url(#tc9)"><rect x="0" y="0" width="80" height="46" rx="0" fill="#eceef7" /><path d="M0 0 L14 0 C14 10 8 18 0 18 Z" fill="#5d50d6"/><rect x="16" y="4" width="64" height="3" rx="0" fill="#222233" /><rect x="18" y="10" width="60" height="34" rx="1" fill="#ffffff" /><rect x="24" y="14" width="10" height="1.8" rx="0" fill="#4fbf8a" /><rect x="40" y="14" width="14" height="1.8" rx="0" fill="#c9ccdc" /><rect x="60" y="14" width="8" height="1.8" rx="0" fill="#9aa2e8" /><rect x="24" y="19" width="10" height="1.8" rx="0" fill="#6c7bf0" /><rect x="40" y="19" width="14" height="1.8" rx="0" fill="#c9ccdc" /><rect x="60" y="19" width="8" height="1.8" rx="0" fill="#9aa2e8" /><rect x="24" y="24" width="10" height="1.8" rx="0" fill="#e57373" /><rect x="40" y="24" width="14" height="1.8" rx="0" fill="#c9ccdc" /><rect x="60" y="24" width="8" height="1.8" rx="0" fill="#9aa2e8" /><rect x="24" y="29" width="10" height="1.8" rx="0" fill="#6c7bf0" /><rect x="40" y="29" width="14" height="1.8" rx="0" fill="#c9ccdc" /><rect x="60" y="29" width="8" height="1.8" rx="0" fill="#9aa2e8" /><rect x="24" y="34" width="10" height="1.8" rx="0" fill="#f0b35a" /><rect x="40" y="34" width="14" height="1.8" rx="0" fill="#c9ccdc" /><rect x="60" y="34" width="8" height="1.8" rx="0" fill="#9aa2e8" /></g></g><g transform="translate(937,905)"><clipPath id="tc10"><rect x="0" y="0" width="80" height="46"/></clipPath><g clip-path="url(#tc10)"><rect x="0" y="0" width="80" height="46" rx="0" fill="#eceef7" /><circle cx="20" cy="14" r="3.2" fill="#6c7bf0"/><circle cx="46" cy="8" r="3.2" fill="#5d50d6"/><circle cx="60" cy="28" r="3.2" fill="#e57373"/><circle cx="30" cy="34" r="3.2" fill="#5d50d6"/><circle cx="70" cy="12" r="3.2" fill="#5d50d6"/><circle cx="50" cy="22" r="3.2" fill="#f0b35a"/><rect x="10" y="18" width="10" height="8" rx="1" fill="#ffffff" /><rect x="44" y="20" width="14" height="6" rx="1" fill="#ffffff" /></g></g><g transform="translate(937,969)"><clipPath id="tc11"><rect x="0" y="0" width="80" height="46"/></clipPath><g clip-path="url(#tc11)"><rect x="0" y="0" width="80" height="46" rx="0" fill="#eceef7" /><rect x="0" y="0" width="14" height="14" rx="0" fill="#5d50d6" /><rect x="20" y="6" width="40" height="30" rx="2" fill="#ffffff" /><rect x="64" y="28" width="16" height="18" rx="0" fill="#5d50d6" /><circle cx="30" cy="20" r="3" fill="#4fbf8a"/><circle cx="46" cy="28" r="3" fill="#5d50d6"/><circle cx="14" cy="36" r="3" fill="#6c7bf0"/><circle cx="60" cy="16" r="3" fill="#e57373"/><circle cx="70" cy="22" r="3" fill="#f0b35a"/></g></g><g transform="translate(937,1033)"><clipPath id="tc12"><rect x="0" y="0" width="80" height="46"/></clipPath><g clip-path="url(#tc12)"><rect x="0" y="0" width="80" height="46" rx="0" fill="#eceef7" /><rect x="4" y="4" width="20" height="16" rx="1" fill="#ffffff" /><rect x="28" y="4" width="24" height="12" rx="1" fill="#ffffff" /><rect x="56" y="4" width="20" height="20" rx="1" fill="#ffffff" /><rect x="4" y="24" width="22" height="18" rx="1" fill="#ffffff" /><rect x="30" y="20" width="22" height="22" rx="1" fill="#ffffff" /><rect x="56" y="28" width="20" height="14" rx="1" fill="#ffffff" /><rect x="36" y="18" width="10" height="10" rx="2" fill="#5d50d6" /><rect x="32" y="24" width="8" height="10" rx="3" fill="#9d95e8" /></g></g><g transform="translate(937,1097)"><clipPath id="tc13"><rect x="0" y="0" width="80" height="46"/></clipPath><g clip-path="url(#tc13)"><rect x="0" y="0" width="80" height="46" rx="0" fill="#eceef7" /><rect x="4" y="4" width="20" height="16" rx="1" fill="#ffffff" /><rect x="28" y="4" width="24" height="12" rx="1" fill="#ffffff" /><rect x="56" y="4" width="20" height="20" rx="1" fill="#ffffff" /><rect x="4" y="24" width="22" height="18" rx="1" fill="#ffffff" /><rect x="30" y="20" width="22" height="22" rx="1" fill="#ffffff" /><rect x="56" y="28" width="20" height="14" rx="1" fill="#ffffff" /><rect x="36" y="18" width="10" height="10" rx="2" fill="#5d50d6" /><rect x="32" y="24" width="8" height="10" rx="3" fill="#9d95e8" /></g></g><g transform="translate(937,1161)"><clipPath id="tc14"><rect x="0" y="0" width="80" height="46"/></clipPath><g clip-path="url(#tc14)"><rect x="0" y="0" width="80" height="46" rx="0" fill="#d9dae5" /><rect x="34" y="12" width="12" height="18" rx="1" fill="#f2f2f6" /><rect x="36" y="15" width="8" height="8" rx="0.5" fill="#7c74d8" /><rect x="36" y="38" width="3" height="3" rx="1.5" fill="#6c66c8" /></g></g></svg>
<div class="abs" style="left:1072px;top:177.5px;width:1171px;height:866.5px;border-radius:20px;box-shadow:0 0 0 5000px rgba(0,0,0,0.45);z-index:30"></div>
<div class="abs" style="left:1066px;top:184px;width:1056px;height:540px;background:#fff;border-radius:16px;box-shadow:0 8px 24px rgba(0,0,0,0.16);z-index:11"></div>
<div class="t" style="z-index:12;left:1114px;top:212.0px;font-size:28px;color:#7b67ee;font-weight:normal;">邀请</div>
<div class="t" style="z-index:12;left:1234px;top:212.0px;font-size:28px;color:#262626;font-weight:normal;">发布</div>
<div class="abs" style="z-index:12;left:1114px;top:274px;width:960px;height:2px;background:#ebe8fb"></div>
<div class="abs" style="z-index:12;left:1114px;top:272px;width:56px;height:4px;background:#7b67ee"></div>
<div class="t" style="z-index:12;left:1114px;top:312.0px;font-size:28px;color:#262626;font-weight:500;-webkit-text-stroke:0.7px #262626;">邀请更多人加入协作</div>
<svg style="z-index:12;left:1376px;top:314px" width="28" height="28" viewBox="0 0 28 28"><circle cx="14" cy="14" r="12.5" fill="none" stroke="#9a9a9a" stroke-width="2.6"/><path d="M10 11 C10 8 12 6.5 14 6.5 C16.5 6.5 18 8.2 18 10.5 C18 13.5 14.5 13.5 14.5 16.5" fill="none" stroke="#9a9a9a" stroke-width="2.6" stroke-linecap="round"/><circle cx="14.5" cy="21" r="1.7" fill="#9a9a9a"/></svg>
<div class="abs" style="z-index:12;left:1112px;top:382px;width:812px;height:84px;border:2px solid #7b67ee;border-radius:10px;background:#fff"></div>
<svg style="z-index:12;left:1133px;top:411px" width="26" height="26" viewBox="0 0 26 26"><line x1="13" y1="0" x2="13" y2="26" stroke="#8c8c8c" stroke-width="2.6"/><line x1="0" y1="13" x2="26" y2="13" stroke="#8c8c8c" stroke-width="2.6"/></svg>
<div class="t" style="z-index:12;left:1178px;top:404.7px;font-size:26px;color:#999999;font-weight:normal;">添加成员或小组</div>
<div class="abs" style="z-index:12;left:1728px;top:414px;width:2px;height:24px;background:#dfdfe8"></div>
<div class="t" style="z-index:12;left:1747px;top:404.9px;font-size:26px;color:#262626;font-weight:normal;">只可更新</div>
<svg style="z-index:12;left:1854px;top:416px" width="25" height="14" viewBox="0 0 25 14"><polyline points="2,12 12.5,2 23,12" fill="none" stroke="#8c8c8c" stroke-width="3"/></svg>
<div class="abs" style="z-index:12;left:1954px;top:384px;width:120px;height:80px;border-radius:12px;background:#7767e4"></div>
<div class="t" style="z-index:12;left:1986px;top:409.0px;font-size:28px;color:#ffffff;font-weight:normal;">添加</div>
<svg style="z-index:12;left:0;top:0" width="2936" height="1616"><defs><clipPath id="av3"><circle cx="1178" cy="527.7" r="22.3"/></clipPath><clipPath id="av2"><circle cx="1161" cy="527.7" r="22.3"/></clipPath><clipPath id="av1"><circle cx="1145.5" cy="527.7" r="22.3"/></clipPath></defs><circle cx="1178" cy="527.7" r="23.3" fill="#e8e8e8"/><g clip-path="url(#av3)"><rect x="1150" y="500" width="60" height="60" fill="#c1b9e7"/><path d="M1184 515 C1190 525 1191 535 1188 548 L1178 552 L1180 515 Z" fill="#8a5aa8"/><circle cx="1186" cy="530" r="3" fill="#e8c8b8"/></g><circle cx="1161" cy="527.7" r="23.3" fill="#e8e8e8"/><g clip-path="url(#av2)"><rect x="1130" y="500" width="60" height="60" fill="#ffffff"/><circle cx="1172" cy="512" r="3.2" fill="#111"/><path d="M1171 516 L1170 522 L1176 530" fill="none" stroke="#222" stroke-width="1.3"/><path d="M1168 546 L1180 545" stroke="#333" stroke-width="1.3"/></g><circle cx="1145.5" cy="527.7" r="23.3" fill="#e8e8e8"/><g clip-path="url(#av1)"><rect x="1120" y="500" width="55" height="60" fill="#d8d9de"/><ellipse cx="1146" cy="524" rx="14" ry="18" fill="#ececea"/><path d="M1132 552 C1134 542 1140 538 1146 538 C1152 538 1158 542 1160 552 Z" fill="#e9e8e6"/><path d="M1146.5 510.5 C1153 510.5 1157 518 1157 525 C1157 532 1152 539.5 1146.5 539.5 C1141 539.5 1136.5 532 1136.5 525 C1136.5 518 1140 510.5 1146.5 510.5 Z" fill="#141414"/><ellipse cx="1142" cy="523" rx="3" ry="3.6" fill="#c49a7c"/><ellipse cx="1151.5" cy="523" rx="2.6" ry="3.6" fill="#c49a7c"/></g></svg>
<div class="t" style="z-index:12;left:1217px;top:508.9px;font-size:26px;color:#636363;font-weight:normal;">3 位协作者</div>
<div class="abs" style="z-index:12;left:1114px;top:630px;width:960px;height:2px;background:#e8e8ef"></div>
<svg style="z-index:12;left:1117px;top:665px" width="27" height="27" viewBox="0 0 27 27"><g fill="none" stroke="#595959" stroke-width="2.8" stroke-linecap="round"><path d="M11 16 C9 14 9 11 11 9 L15 5 C17 3 20.5 3 22.5 5 C24.5 7 24.5 10.5 22.5 12.5 L20.5 14.5"/><path d="M16 11 C18 13 18 16 16 18 L12 22 C10 24 6.5 24 4.5 22 C2.5 20 2.5 16.5 4.5 14.5 L6.5 12.5"/></g></svg>
<div class="t" style="z-index:12;left:1162px;top:659.8px;font-size:28px;color:#595959;font-weight:normal;">复制链接</div>
<div class="abs" style="left:1730px;top:472px;width:480px;height:535px;background:#fff;border-radius:12px;box-shadow:0 6px 28px rgba(0,0,0,0.14);z-index:13"></div>
<div class="t" style="z-index:14;left:1763px;top:500.3px;font-size:28px;color:#262626;font-weight:normal;">可以管理</div>
<div class="t" style="z-index:14;left:1762px;top:538.9px;font-size:24px;color:#9a9a9a;font-weight:normal;">拥有该表格的所有操作权限</div>
<div class="t" style="z-index:14;left:1763px;top:612.4px;font-size:28px;color:#262626;font-weight:normal;">可以编辑</div>
<div class="t" style="z-index:14;left:1762px;top:651.6px;font-size:24px;color:#9a9a9a;font-weight:normal;">在「只可更新」基础上，还可以删除记</div>
<div class="t" style="z-index:14;left:1762px;top:687.8px;font-size:24px;color:#9a9a9a;font-weight:normal;">录和增删视图</div>
<div class="t" style="z-index:14;left:1763px;top:760.4px;font-size:28px;color:#7b67ee;font-weight:normal;">只可更新</div>
<div class="t" style="z-index:14;left:1762px;top:799.3px;font-size:24px;color:#9a9a9a;font-weight:normal;">在「只可阅读」基础上，还可以新增和</div>
<div class="t" style="z-index:14;left:1762px;top:835.3px;font-size:24px;color:#9a9a9a;font-weight:normal;">编辑记录</div>
<div class="t" style="z-index:14;left:1763px;top:908.8px;font-size:28px;color:#262626;font-weight:normal;">只可阅读</div>
<div class="t" style="z-index:14;left:1762px;top:947.7px;font-size:24px;color:#9a9a9a;font-weight:normal;">可查看该表格内容或进行评论</div>
</div></body></html>
